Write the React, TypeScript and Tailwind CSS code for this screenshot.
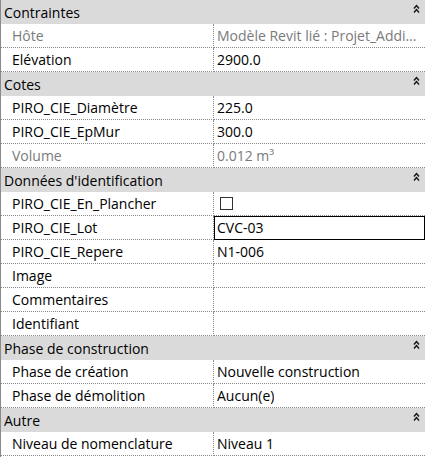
import React from "react";

type Row = {
  label: string;
  value?: string;
  disabled?: boolean;
  kind?: "check" | "edit";
};

type Section = { title: string; rows: Row[] };

const sections: Section[] = [
  {
    title: "Contraintes",
    rows: [
      { label: "Hôte", value: "Modèle Revit lié : Projet_Addi…", disabled: true },
      { label: "Elévation", value: "2900.0" },
    ],
  },
  {
    title: "Cotes",
    rows: [
      { label: "PIRO_CIE_Diamètre", value: "225.0" },
      { label: "PIRO_CIE_EpMur", value: "300.0" },
      { label: "Volume", value: "0.012 m³", disabled: true },
    ],
  },
  {
    title: "Données d'identification",
    rows: [
      { label: "PIRO_CIE_En_Plancher", kind: "check" },
      { label: "PIRO_CIE_Lot", value: "CVC-03", kind: "edit" },
      { label: "PIRO_CIE_Repere", value: "N1-006" },
      { label: "Image" },
      { label: "Commentaires" },
      { label: "Identifiant" },
    ],
  },
  {
    title: "Phase de construction",
    rows: [
      { label: "Phase de création", value: "Nouvelle construction" },
      { label: "Phase de démolition", value: "Aucun(e)" },
    ],
  },
  {
    title: "Autre",
    rows: [{ label: "Niveau de nomenclature", value: "Niveau 1" }],
  },
];

const Collapse = () => (
  <svg width="7" height="9" viewBox="0 0 7 9" className="mt-[4px] mr-[5px]">
    <path d="M1 4.5 L3.5 1.5 L6 4.5" fill="none" stroke="#111" strokeWidth="1.4" />
    <path d="M1 8.5 L3.5 5.5 L6 8.5" fill="none" stroke="#111" strokeWidth="1.4" />
  </svg>
);

const PropertyRow = ({ row }: { row: Row }) => {
  const text = row.disabled ? "text-[#7a7a7a]" : "text-black";
  return (
    <div className="flex h-6">
      <div
        className={`flex w-[213px] items-center border-r border-b border-dotted border-r-[#8a8a8a] border-b-[#8a8a8a] pl-[11px] pb-[1px] ${text}`}
      >
        {row.label}
      </div>
      {row.kind === "edit" ? (
        <div className="flex flex-1 items-center border border-black pl-[2px] pb-[1px]">
          {row.value}
        </div>
      ) : (
        <div
          className={`flex min-w-0 flex-1 items-center border-b border-dotted border-b-[#8a8a8a] pl-[3px] pb-[1px] ${text}`}
        >
          {row.kind === "check" ? (
            <span className="ml-[3px] h-[13px] w-[13px] border-[1.5px] border-[#333]" />
          ) : (
            <span className="truncate">{row.value}</span>
          )}
        </div>
      )}
    </div>
  );
};

const App: React.FC = () => {
  return (
    <div className="h-[457px] w-[425px] overflow-hidden border-l border-[#8a8a8a] bg-white font-['Open_Sans',sans-serif] text-[14px]">
      {sections.map((s) => (
        <div key={s.title}>
          <div className="flex h-6 justify-between bg-[#dadada]">
            <span className="pt-[2px] pl-[3px] text-black">{s.title}</span>
            <Collapse />
          </div>
          {s.rows.map((r) => (
            <PropertyRow key={r.label} row={r} />
          ))}
        </div>
      ))}
    </div>
  );
};

export default App;
